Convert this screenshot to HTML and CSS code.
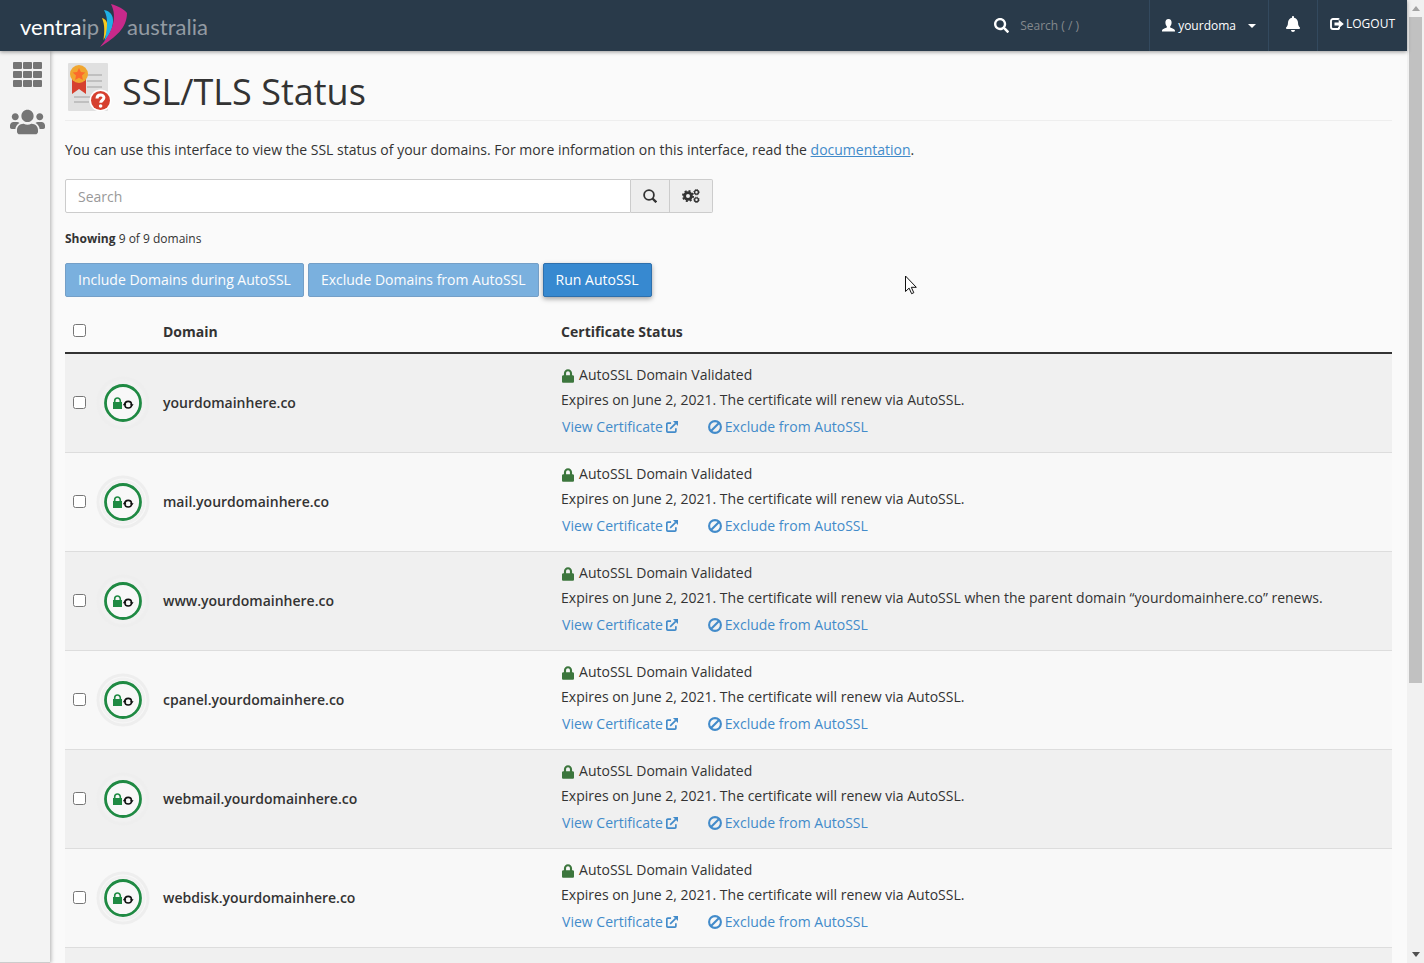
FILE: index.html
```html
<!DOCTYPE html>
<html lang="en">
<head>
    <meta charset="UTF-8">
    <meta name="viewport" content="width=device-width, initial-scale=1.0">
    <title>SSL/TLS Status</title>
    <link rel="stylesheet" href="styles.css">
</head>
<body>

    <!-- Icon sprite -->
    <svg class="sprite" aria-hidden="true">
        <symbol id="i-search" viewBox="0 0 512 512"><path d="M505 442.7L405.3 343c-4.5-4.5-10.6-7-17-7H372c27.6-35.3 44-79.7 44-128C416 93.1 322.9 0 208 0S0 93.1 0 208s93.1 208 208 208c48.3 0 92.7-16.4 128-44v16.3c0 6.4 2.5 12.5 7 17l99.7 99.7c9.4 9.4 24.6 9.4 33.9 0l28.3-28.3c9.4-9.4 9.4-24.6.1-34zM208 336c-70.7 0-128-57.2-128-128 0-70.7 57.2-128 128-128 70.7 0 128 57.2 128 128 0 70.7-57.2 128-128 128z"/></symbol>
        <symbol id="i-lock" viewBox="0 0 448 512"><path d="M400 224h-24v-72C376 68.2 307.8 0 224 0S72 68.2 72 152v72H48c-26.5 0-48 21.5-48 48v192c0 26.5 21.5 48 48 48h352c26.5 0 48-21.5 48-48V272c0-26.5-21.5-48-48-48zm-104 0H152v-72c0-39.7 32.3-72 72-72s72 32.3 72 72v72z"/></symbol>
        <symbol id="i-external" viewBox="0 0 13 13"><path d="M5.5 2.300H1.900a1 1 0 0 0-1 1v7.800a1 1 0 0 0 1 1h7.800a1 1 0 0 0 1-1V7.800M4.500 8.500L10.500 2.500" fill="none" stroke="currentColor" stroke-width="1.8"/><path d="M7.500 0H13v5.500z"/></symbol>
        <symbol id="i-ban" viewBox="0 0 14 14"><circle cx="7" cy="7" r="5.9" fill="none" stroke="currentColor" stroke-width="2.1"/><path d="M3 11L11 3" stroke="currentColor" stroke-width="2.1"/></symbol>
        <symbol id="i-badge" viewBox="0 0 54 54">
            <circle cx="27" cy="27" r="25" fill="none" stroke="#eee" stroke-width="3"/>
            <circle cx="27" cy="27" r="21" fill="none" stroke="#f1f1f1" stroke-width="3"/>
            <circle cx="27" cy="27" r="17.5" fill="#f8f8f8" stroke="#1f8a43" stroke-width="2.8"/>
            <path d="M17 26h9v7h-9z" fill="#1f8a43"/>
            <path d="M18.700 27v-2.200a2.800 2.800 0 0 1 5.600 0V27" fill="none" stroke="#1f8a43" stroke-width="1.6"/>
            <circle cx="32.200" cy="28.700" r="3.300" fill="none" stroke="#111" stroke-width="1.6"/>
            <path d="M34 28.200h3.600l-1.800 2.600zM30.400 29.200h-3.600l1.800-2.600z" fill="#111"/>
        </symbol>
    </svg>

    <div class="page">
        <header class="topbar">
            <a class="logo" href="#" aria-label="VentraIP Australia">
                <span class="logo-name">ventra<span class="logo-dim">ip</span></span>
                <svg class="logo-mark" width="28" height="44" viewBox="0 0 28 44">
                    <path d="M3 14c4 1 5.500 4 5.500 9s-1.500 9-4 13c1-8 1.500-15-1.500-22z" fill="#f8c81c"/>
                    <path d="M5 6c6 1 9.500 5 9 12-.5 8-4 13-8.500 19C8 26 10 15 5 6z" fill="#1fb0e6"/>
                    <path d="M12 0c7 2 13 5 16 9 0 15-11 24-27 34C13 29 19 14 12 0z" fill="#c8298a"/>
                </svg>
                <span class="logo-dim">australia</span>
            </a>
            <form class="top-search">
                <svg width="15" height="15"><use href="#i-search"/></svg>
                <input type="text" placeholder="Search ( / )" aria-label="Search tools">
            </form>
            <button class="top-item user" type="button">
                <svg width="13" height="13" viewBox="0 0 13 13"><path d="M6.500 0C8.600 0 9.700 1.600 9.600 3.800 9.500 5.600 8.800 6.700 8.200 7.300v1.200c1.300.8 4.600 1.200 4.800 3.300v.7H0v-.7C.2 9.700 3.500 9.300 4.800 8.500V7.300C4.200 6.700 3.500 5.600 3.400 3.800 3.300 1.600 4.400 0 6.500 0z"/></svg>
                <span class="user-name">yourdoma</span>
                <span class="caret"></span>
            </button>
            <button class="top-item bell" type="button" aria-label="Notifications">
                <svg width="14" height="16" viewBox="0 0 448 512"><path d="M224 512c35.320 0 63.970-28.650 63.970-64H160.030c0 35.350 28.650 64 63.970 64zm215.390-149.710c-19.320-20.760-55.470-51.990-55.470-154.290 0-77.700-54.480-139.900-127.940-155.160V32c0-17.670-14.320-32-31.980-32s-31.980 14.330-31.980 32v20.840C118.560 68.100 64.080 130.300 64.080 208c0 102.300-36.150 133.530-55.470 154.290-6 6.450-8.660 14.160-8.610 21.710.11 16.400 12.980 32 32.100 32h383.800c19.120 0 32-15.600 32.100-32 .05-7.550-2.610-15.270-8.610-21.710z"/></svg>
            </button>
            <a class="top-item logout" href="#">
                <svg width="14" height="12" viewBox="0 0 14 12"><path d="M9 1.500A1 1 0 0 0 8 1H3a2 2 0 0 0-2 2v6a2 2 0 0 0 2 2h5a1 1 0 0 0 1-.5V9" fill="none" stroke="currentColor" stroke-width="1.9"/><path d="M4.500 4.400H8.700V1.700L13.800 6l-5.100 4.300V7.600H4.500z"/></svg>
                LOGOUT
            </a>
        </header>

        <div class="main">
            <nav class="sidebar">
                <a href="#" aria-label="Home">
                    <svg width="29" height="25" viewBox="0 0 29 25">
                        <rect width="9" height="7" rx="1"/><rect x="10" width="9" height="7" rx="1"/><rect x="20" width="9" height="7" rx="1"/>
                        <rect y="9" width="9" height="7" rx="1"/><rect x="10" y="9" width="9" height="7" rx="1"/><rect x="20" y="9" width="9" height="7" rx="1"/>
                        <rect y="18" width="9" height="7" rx="1"/><rect x="10" y="18" width="9" height="7" rx="1"/><rect x="20" y="18" width="9" height="7" rx="1"/>
                    </svg>
                </a>
                <a href="#" aria-label="User manager">
                    <svg width="35" height="28" viewBox="0 0 640 512"><path d="M96 224c35.300 0 64-28.700 64-64s-28.700-64-64-64-64 28.700-64 64 28.700 64 64 64zm448 0c35.300 0 64-28.700 64-64s-28.700-64-64-64-64 28.700-64 64 28.700 64 64 64zm32 32h-64c-17.600 0-33.500 7.100-45.100 18.600 40.300 22.100 68.900 62 75.100 109.400h66c17.700 0 32-14.300 32-32v-32c0-35.300-28.700-64-64-64zm-256 0c61.900 0 112-50.100 112-112S381.900 32 320 32 208 82.100 208 144s50.100 112 112 112zm76.800 32h-8.300c-20.800 10-43.900 16-68.500 16s-47.600-6-68.500-16h-8.300C179.600 288 128 339.600 128 403.200V432c0 26.500 21.500 48 48 48h288c26.500 0 48-21.500 48-48v-28.800c0-63.600-51.600-115.200-115.200-115.200zm-223.700-13.400C161.500 263.100 145.600 256 128 256H64c-35.300 0-64 28.700-64 64v32c0 17.700 14.300 32 32 32h65.900c6.300-47.400 34.900-87.300 75.200-109.400z"/></svg>
                </a>
            </nav>

            <main class="content">
                <h1>
                    <svg width="48" height="48" viewBox="0 0 48 48" aria-hidden="true">
                        <rect x="3" width="40" height="48" rx="1" fill="#e0e0e0"/>
                        <path d="M22 12h15M22 18h15M22 24h15M9 34h18M9 39h15" stroke="#b5b5b5" stroke-width="1.5"/>
                        <path d="M7 16h14v15l-7-5-7 5z" fill="#d6402f"/>
                        <circle cx="14" cy="11" r="9" fill="#f0a630"/>
                        <path d="M14 5l1.900 4 4.400.5-3.300 3 .9 4.400-3.900-2.200-3.900 2.200.9-4.400-3.300-3 4.400-.5z" fill="#fb6a2c"/>
                        <circle cx="35.500" cy="37.500" r="11" fill="#fff"/>
                        <circle cx="35.500" cy="37.500" r="9.500" fill="#d6402f"/>
                        <path d="M32 35.500c0-4.800 7-4.500 6.900-.7 0 2.400-3.100 2.500-3.200 5" fill="none" stroke="#fff" stroke-width="3"/>
                        <circle cx="35.600" cy="43" r="1.800" fill="#fff"/>
                    </svg>
                    <span>SSL/TLS Status</span>
                </h1>

                <p class="intro">You can use this interface to view the SSL status of your domains. For more information on this interface, read the <a href="#">documentation</a>.</p>

                <form class="search-group">
                    <input type="text" placeholder="Search" aria-label="Search domains">
                    <button class="search-btn" type="button" aria-label="Search">
                        <svg width="14" height="14" viewBox="0 0 14 14"><circle cx="6" cy="6" r="4.900" fill="none" stroke="currentColor" stroke-width="1.8"/><path d="M9.500 9.500l3.800 3.800" stroke="currentColor" stroke-width="2.3"/></svg>
                    </button>
                    <button class="gear-btn" type="button" aria-label="Settings">
                        <svg width="18" height="14" viewBox="0 0 18 14">
                            <circle cx="6" cy="7" r="3.400" fill="none" stroke="currentColor" stroke-width="2.8"/>
                            <circle cx="6" cy="7" r="5.100" fill="none" stroke="currentColor" stroke-width="1.8" stroke-dasharray="2 2"/>
                            <circle cx="14.500" cy="3.200" r="1.900" fill="none" stroke="currentColor" stroke-width="1.4"/>
                            <circle cx="14.500" cy="3.200" r="2.700" fill="none" stroke="currentColor" stroke-dasharray="1 1.120"/>
                            <circle cx="14.500" cy="10.800" r="1.900" fill="none" stroke="currentColor" stroke-width="1.4"/>
                            <circle cx="14.500" cy="10.800" r="2.700" fill="none" stroke="currentColor" stroke-dasharray="1 1.120"/>
                        </svg>
                    </button>
                </form>

                <p class="showing"><strong>Showing</strong> 9 of 9 domains</p>

                <div class="actions">
                    <button class="btn" type="button" disabled>Include Domains during AutoSSL</button>
                    <button class="btn" type="button" disabled>Exclude Domains from AutoSSL</button>
                    <button class="btn btn-run" type="button">Run AutoSSL</button>
                </div>

                <table class="domains">
                    <thead>
                        <tr>
                            <th class="col-check"><input type="checkbox" aria-label="Select all domains"></th>
                            <th class="col-badge"></th>
                            <th class="col-domain">Domain</th>
                            <th>Certificate Status</th>
                        </tr>
                    </thead>
                    <tbody>
                        <tr>
                            <td class="col-check"><input type="checkbox" id="d1"></td>
                            <td class="col-badge"><svg width="54" height="54"><use href="#i-badge"/></svg></td>
                            <td class="col-domain"><label for="d1">yourdomainhere.co</label></td>
                            <td class="col-status">
                                <div class="line"><svg class="lock" width="12" height="14"><use href="#i-lock"/></svg>AutoSSL Domain Validated</div>
                                <div class="line">Expires on June 2, 2021. The certificate will renew via AutoSSL.</div>
                                <div class="links"><a href="#">View Certificate <svg width="12" height="12"><use href="#i-external"/></svg></a><a href="#"><svg width="14" height="14"><use href="#i-ban"/></svg> Exclude from AutoSSL</a></div>
                            </td>
                        </tr>
                        <tr>
                            <td class="col-check"><input type="checkbox" id="d2"></td>
                            <td class="col-badge"><svg width="54" height="54"><use href="#i-badge"/></svg></td>
                            <td class="col-domain"><label for="d2">mail.yourdomainhere.co</label></td>
                            <td class="col-status">
                                <div class="line"><svg class="lock" width="12" height="14"><use href="#i-lock"/></svg>AutoSSL Domain Validated</div>
                                <div class="line">Expires on June 2, 2021. The certificate will renew via AutoSSL.</div>
                                <div class="links"><a href="#">View Certificate <svg width="12" height="12"><use href="#i-external"/></svg></a><a href="#"><svg width="14" height="14"><use href="#i-ban"/></svg> Exclude from AutoSSL</a></div>
                            </td>
                        </tr>
                        <tr>
                            <td class="col-check"><input type="checkbox" id="d3"></td>
                            <td class="col-badge"><svg width="54" height="54"><use href="#i-badge"/></svg></td>
                            <td class="col-domain"><label for="d3">www.yourdomainhere.co</label></td>
                            <td class="col-status">
                                <div class="line"><svg class="lock" width="12" height="14"><use href="#i-lock"/></svg>AutoSSL Domain Validated</div>
                                <div class="line">Expires on June 2, 2021. The certificate will renew via AutoSSL when the parent domain “yourdomainhere.co” renews.</div>
                                <div class="links"><a href="#">View Certificate <svg width="12" height="12"><use href="#i-external"/></svg></a><a href="#"><svg width="14" height="14"><use href="#i-ban"/></svg> Exclude from AutoSSL</a></div>
                            </td>
                        </tr>
                        <tr>
                            <td class="col-check"><input type="checkbox" id="d4"></td>
                            <td class="col-badge"><svg width="54" height="54"><use href="#i-badge"/></svg></td>
                            <td class="col-domain"><label for="d4">cpanel.yourdomainhere.co</label></td>
                            <td class="col-status">
                                <div class="line"><svg class="lock" width="12" height="14"><use href="#i-lock"/></svg>AutoSSL Domain Validated</div>
                                <div class="line">Expires on June 2, 2021. The certificate will renew via AutoSSL.</div>
                                <div class="links"><a href="#">View Certificate <svg width="12" height="12"><use href="#i-external"/></svg></a><a href="#"><svg width="14" height="14"><use href="#i-ban"/></svg> Exclude from AutoSSL</a></div>
                            </td>
                        </tr>
                        <tr>
                            <td class="col-check"><input type="checkbox" id="d5"></td>
                            <td class="col-badge"><svg width="54" height="54"><use href="#i-badge"/></svg></td>
                            <td class="col-domain"><label for="d5">webmail.yourdomainhere.co</label></td>
                            <td class="col-status">
                                <div class="line"><svg class="lock" width="12" height="14"><use href="#i-lock"/></svg>AutoSSL Domain Validated</div>
                                <div class="line">Expires on June 2, 2021. The certificate will renew via AutoSSL.</div>
                                <div class="links"><a href="#">View Certificate <svg width="12" height="12"><use href="#i-external"/></svg></a><a href="#"><svg width="14" height="14"><use href="#i-ban"/></svg> Exclude from AutoSSL</a></div>
                            </td>
                        </tr>
                        <tr>
                            <td class="col-check"><input type="checkbox" id="d6"></td>
                            <td class="col-badge"><svg width="54" height="54"><use href="#i-badge"/></svg></td>
                            <td class="col-domain"><label for="d6">webdisk.yourdomainhere.co</label></td>
                            <td class="col-status">
                                <div class="line"><svg class="lock" width="12" height="14"><use href="#i-lock"/></svg>AutoSSL Domain Validated</div>
                                <div class="line">Expires on June 2, 2021. The certificate will renew via AutoSSL.</div>
                                <div class="links"><a href="#">View Certificate <svg width="12" height="12"><use href="#i-external"/></svg></a><a href="#"><svg width="14" height="14"><use href="#i-ban"/></svg> Exclude from AutoSSL</a></div>
                            </td>
                        </tr>
                        <tr>
                            <td colspan="4"></td>
                        </tr>
                    </tbody>
                </table>
            </main>
        </div>
    </div>

    <div class="scrollbar" aria-hidden="true">
        <span class="arrow arrow-up"></span>
        <span class="thumb"></span>
        <span class="track"></span>
        <span class="arrow arrow-down"></span>
    </div>

    <svg class="pointer" width="12" height="20" viewBox="0 0 12 20" aria-hidden="true"><path d="M.5 1v15.500l3.600-3.400 2.500 5.600 2.200-1-2.500-5.400h5z" fill="#fff" stroke="#111" stroke-width="1"/></svg>

</body>
</html>
```
FILE: styles.css
```css
* {
    box-sizing: border-box;
}
body {
    margin: 0;
    height: 100vh;
    display: flex;
    overflow: hidden;
    background: #fafafa;
    color: #333;
    font-family: "Open Sans", sans-serif;
    font-size: 14px;
    line-height: 20px;
}
svg {
    fill: currentColor;
    flex: none;
}
button,
input {
    font: inherit;
}
a {
    color: #428bca;
    text-decoration: none;
}
.sprite {
    display: none;
}
.page {
    flex: 1;
    min-width: 0;
    display: flex;
    flex-direction: column;
}

/* Top bar */
.topbar {
    flex: none;
    height: 51px;
    display: flex;
    align-items: stretch;
    background: #293a4a;
    color: #fff;
    box-shadow: 0 1px 4px rgba(0, 0, 0, 0.4);
    z-index: 2;
}
.logo {
    display: flex;
    align-items: center;
    margin-right: auto;
    padding: 2px 0 0 20px;
    color: #fff;
    font-family: Lato, sans-serif;
    font-size: 22px;
    line-height: 26px;
}
.logo-mark {
    margin-bottom: 2px;
}
.logo-dim {
    color: #939ba3;
}
.top-search {
    display: flex;
    align-items: center;
    gap: 11px;
}
.top-search input {
    width: 129px;
    padding: 0;
    border: 0;
    background: none;
    color: #fff;
    font-size: 12px;
}
.top-search input::placeholder {
    color: #84898d;
}
.top-item {
    display: flex;
    align-items: center;
    padding: 0 12px;
    border: 0;
    border-left: 1px solid #33495e;
    background: none;
    color: #fff;
    font-size: 12px;
}
.user-name {
    margin: 0 12px 0 3px;
    font-weight: 500;
}
.caret {
    border: 4px solid transparent;
    border-top-color: #fff;
    border-bottom: 0;
}
.bell {
    padding: 0 17px 3px;
}
.logout {
    gap: 2px;
    padding-bottom: 3px;
}

/* Sidebar */
.main {
    flex: 1;
    min-height: 0;
    display: flex;
}
.sidebar {
    flex: none;
    width: 50px;
    display: flex;
    flex-direction: column;
    align-items: center;
    gap: 18px;
    padding: 11px 0 0 5px;
    border-bottom: 1px solid #ccc;
    background: #f3f3f3;
    box-shadow: 1px 0 4px rgba(0, 0, 0, 0.3);
}
.sidebar a {
    height: 28px;
    color: #757575;
}

/* Content */
.content {
    flex: 1;
    min-width: 0;
    padding: 12px 15px 0;
    overflow: hidden;
}
h1 {
    display: flex;
    align-items: flex-start;
    gap: 9px;
    margin: 0 0 19px;
    height: 58px;
    border-bottom: 1px solid #eee;
    font-size: 36px;
    font-weight: 400;
    line-height: 58px;
}
p {
    margin: 0;
}
.intro a {
    text-decoration: underline;
}
.search-group {
    display: flex;
    width: calc(50% - 16px);
    height: 34px;
    margin: 19px 0 16px;
}
.search-group input {
    flex: 1;
    min-width: 0;
    padding: 1px 12px 0;
    border: 1px solid #ccc;
    border-radius: 2px 0 0 2px;
    background: #fff;
}
.search-group input::placeholder {
    color: #999;
}
.search-group button {
    padding: 0 12px;
    border: 1px solid #ccc;
    border-left: 0;
    background: #eee;
    color: #333;
}
.search-group svg {
    display: block;
}
.gear-btn {
    border-radius: 0 2px 2px 0;
}
.showing {
    font-size: 12px;
}
.actions {
    display: flex;
    gap: 4px;
    margin: 14px 0;
}
.btn {
    height: 34px;
    padding: 0 12px;
    border: 1px solid #2e70ad;
    border-radius: 2px;
    background: #3789d0;
    color: #fff;
}
.btn:disabled {
    opacity: 0.65;
}
.btn-run {
    box-shadow: 0 2px 5px rgba(0, 0, 0, 0.35);
}

/* Domain table */
.domains {
    width: 100%;
    table-layout: fixed;
    border-collapse: separate;
    border-spacing: 0;
}
.domains th {
    height: 43px;
    padding: 0 8px;
    border-bottom: 2px solid #333;
    text-align: left;
    font-weight: 700;
}
.domains td {
    height: 99px;
    padding: 0 8px;
    border-bottom: 1px solid #ddd;
    background: #f8f8f8;
}
.domains tbody tr:nth-child(odd) td {
    background: #f0f0f0;
}
.domains .col-check {
    width: 28px;
    padding: 0 0 2px 8px;
}
.domains .col-badge {
    width: 62px;
    padding: 0 3px;
}
.col-domain {
    width: 30%;
}
.col-domain label {
    font-weight: 600;
}
.domains .col-status {
    padding-bottom: 2px;
}
.domains input {
    display: block;
    margin: 0;
}
.col-badge svg {
    display: block;
}
.line {
    display: flex;
    align-items: center;
    line-height: 25px;
}
.lock {
    margin: 2px 5px 0 1px;
    color: #3c763d;
}
.links {
    display: flex;
    gap: 30px;
    padding-left: 1px;
    line-height: 30px;
}
.links a {
    display: flex;
    align-items: center;
    gap: 3px;
}

/* Scrollbar */
.scrollbar {
    flex: none;
    width: 17px;
    display: flex;
    flex-direction: column;
    align-items: center;
    background: #f1f1f1;
}
.arrow {
    margin: 6px 0;
    border: 4px solid transparent;
}
.arrow-up {
    border-top: 0;
    border-bottom: 5px solid #a3a3a3;
}
.arrow-down {
    border-bottom: 0;
    border-top: 5px solid #505050;
}
.thumb {
    flex: 666;
    width: 13px;
    background: #c1c1c1;
}
.track {
    flex: 263;
}
.pointer {
    position: absolute;
    left: 905px;
    top: 275px;
}
```
